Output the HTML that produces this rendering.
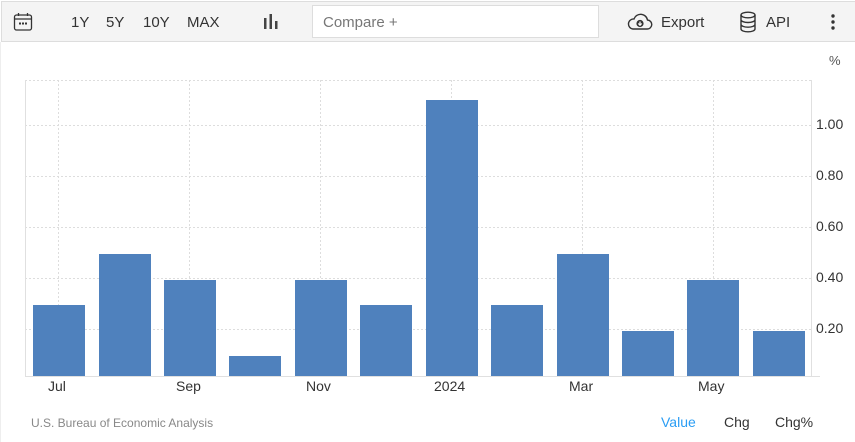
<!DOCTYPE html>
<html><head><meta charset="utf-8"><style>
body{margin:0;width:855px;height:442px;background:#fff;font-family:"Liberation Sans",Arial,sans-serif;position:relative;overflow:hidden}
.bar{position:absolute;left:1px;top:1px;width:854px;height:41px;background:#f4f4f4;border:1px solid #ddd;border-right:none;box-sizing:border-box}
.t{position:absolute;font-size:15px;color:#333;top:14px}
.cmp{position:absolute;left:312px;top:5px;width:287px;height:33px;background:#fff;border:1px solid #ddd;box-sizing:border-box;font-size:15px;color:#777;padding:8px 10px}
.lbl{position:absolute;font-size:14px;color:#333}
.leftb{position:absolute;left:0;top:42px;width:1px;height:400px;background:#eee}
</style></head><body>
<div class="bar"></div>
<div class="leftb"></div>
<svg style="position:absolute;left:13px;top:12px" width="20" height="20" viewBox="0 0 20 20"><rect x="1.5" y="3" width="17" height="15" rx="2" fill="none" stroke="#333" stroke-width="1.3"/><line x1="1.5" y1="7" x2="18.5" y2="7" stroke="#333" stroke-width="1.2"/><line x1="5.5" y1="1" x2="5.5" y2="4" stroke="#333" stroke-width="1.3"/><line x1="14.5" y1="1" x2="14.5" y2="4" stroke="#333" stroke-width="1.3"/><rect x="6" y="10.5" width="2" height="2" fill="#333"/><rect x="9" y="10.5" width="2" height="2" fill="#333"/><rect x="12" y="10.5" width="2" height="2" fill="#333"/></svg>
<div class="t" style="left:71px">1Y</div>
<div class="t" style="left:106px">5Y</div>
<div class="t" style="left:143px">10Y</div>
<div class="t" style="left:187px">MAX</div>
<svg style="position:absolute;left:263px;top:13px" width="16" height="18"><rect x="1" y="5" width="2.5" height="11" fill="#444"/><rect x="6.5" y="1" width="2.5" height="15" fill="#444"/><rect x="12" y="8" width="2.5" height="8" fill="#444"/></svg>
<div class="cmp">Compare +</div>
<svg style="position:absolute;left:627px;top:12px" width="26" height="20" viewBox="0 0 26 20"><path d="M6 17 H20 A4.5 4.5 0 0 0 20.5 8 A7 7 0 0 0 7 7 A5 5 0 0 0 6 17 Z" fill="none" stroke="#333" stroke-width="1.4"/><circle cx="13" cy="11.5" r="3.6" fill="#333"/><path d="M13 9.5 V13 M11.3 11.5 L13 13.3 L14.7 11.5" stroke="#fff" stroke-width="1.2" fill="none"/></svg>
<div class="t" style="left:661px">Export</div>
<svg style="position:absolute;left:739px;top:11px" width="18" height="22" viewBox="0 0 18 22"><ellipse cx="9" cy="4" rx="7" ry="2.8" fill="none" stroke="#333" stroke-width="1.4"/><path d="M2 4 V18 A7 2.8 0 0 0 16 18 V4 M2 8.7 A7 2.8 0 0 0 16 8.7 M2 13.4 A7 2.8 0 0 0 16 13.4" fill="none" stroke="#333" stroke-width="1.4"/></svg>
<div class="t" style="left:766px">API</div>
<svg style="position:absolute;left:830px;top:14px" width="6" height="16"><circle cx="3" cy="2" r="1.7" fill="#333"/><circle cx="3" cy="8" r="1.7" fill="#333"/><circle cx="3" cy="14" r="1.7" fill="#333"/></svg>

<svg style="position:absolute;left:0;top:0" width="855" height="442">
<g stroke="#ddd" stroke-width="1" stroke-dasharray="2,2">
<line x1="25" y1="80.5" x2="811" y2="80.5"/>
<line x1="25" y1="125.5" x2="811" y2="125.5"/>
<line x1="25" y1="176.5" x2="811" y2="176.5"/>
<line x1="25" y1="227.5" x2="811" y2="227.5"/>
<line x1="25" y1="278.5" x2="811" y2="278.5"/>
<line x1="25" y1="329.5" x2="811" y2="329.5"/>
<line x1="58.5" y1="80" x2="58.5" y2="376"/>
<line x1="189.5" y1="80" x2="189.5" y2="376"/>
<line x1="320.5" y1="80" x2="320.5" y2="376"/>
<line x1="451.5" y1="80" x2="451.5" y2="376"/>
<line x1="582.5" y1="80" x2="582.5" y2="376"/>
<line x1="713.5" y1="80" x2="713.5" y2="376"/>
</g>
<g fill="#4f81bd">
<rect x="33" y="305" width="52" height="71"/>
<rect x="99" y="254" width="52" height="122"/>
<rect x="164" y="280" width="52" height="96"/>
<rect x="229" y="356" width="52" height="20"/>
<rect x="295" y="280" width="52" height="96"/>
<rect x="360" y="305" width="52" height="71"/>
<rect x="426" y="100" width="52" height="276"/>
<rect x="491" y="305" width="52" height="71"/>
<rect x="557" y="254" width="52" height="122"/>
<rect x="622" y="331" width="52" height="45"/>
<rect x="687" y="280" width="52" height="96"/>
<rect x="753" y="331" width="52" height="45"/>
</g>
<line x1="25.5" y1="80" x2="25.5" y2="376" stroke="#e0e0e0"/>
<line x1="811.5" y1="80" x2="811.5" y2="376" stroke="#e0e0e0"/>
<line x1="25" y1="376.5" x2="820" y2="376.5" stroke="#e0e0e0"/>
</svg>
<div class="lbl" style="left:829px;top:53px;font-size:13px;color:#555">%</div>
<div class="lbl" style="left:816px;top:116px">1.00</div>
<div class="lbl" style="left:816px;top:167px">0.80</div>
<div class="lbl" style="left:816px;top:218px">0.60</div>
<div class="lbl" style="left:816px;top:269px">0.40</div>
<div class="lbl" style="left:816px;top:320px">0.20</div>
<div class="lbl" style="left:48px;top:378px">Jul</div>
<div class="lbl" style="left:176px;top:378px">Sep</div>
<div class="lbl" style="left:306px;top:378px">Nov</div>
<div class="lbl" style="left:434px;top:378px">2024</div>
<div class="lbl" style="left:569px;top:378px">Mar</div>
<div class="lbl" style="left:698px;top:378px">May</div>
<div class="lbl" style="left:31px;top:416px;font-size:12px;color:#888">U.S. Bureau of Economic Analysis</div>
<div class="lbl" style="left:661px;top:414px;color:#2a9df4">Value</div>
<div class="lbl" style="left:724px;top:414px">Chg</div>
<div class="lbl" style="left:775px;top:414px">Chg%</div>
</body></html>
